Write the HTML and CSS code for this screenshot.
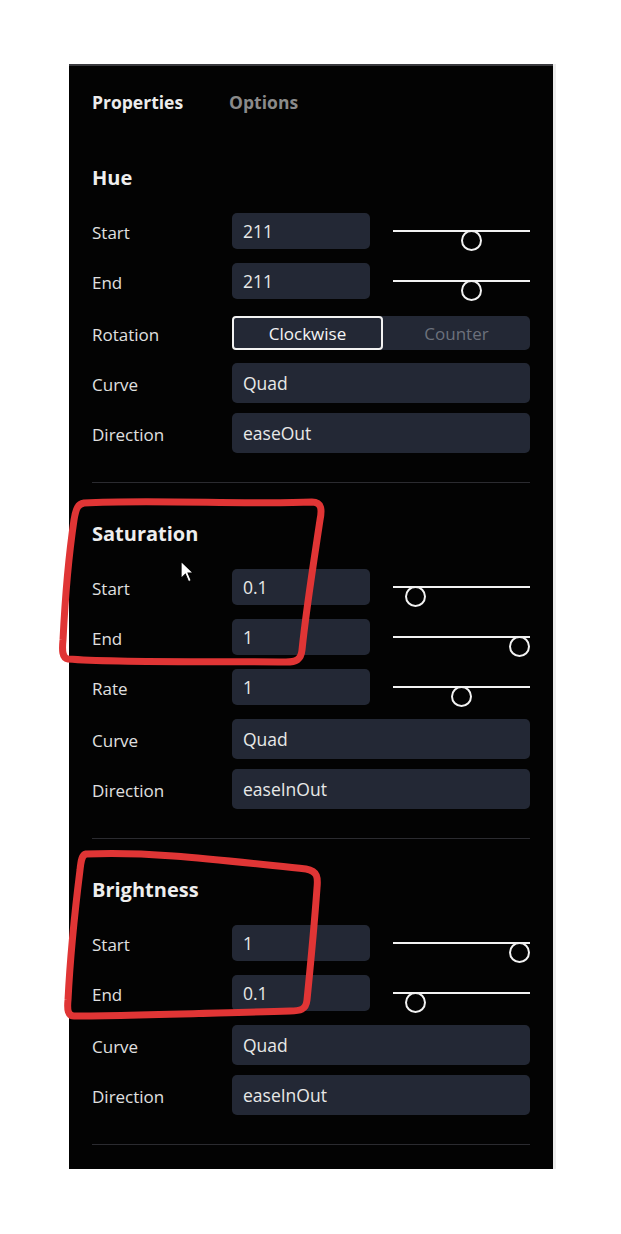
FILE: index.html
```html
<!DOCTYPE html>
<html>
<head>
	<meta charset="utf-8">
	<link rel="stylesheet" href="styles.css">
</head>
<body>
<div class="page">
	<div class="panel">
		<nav class="tabs">
			<span class="tab active">Properties</span>
			<span class="tab">Options</span>
		</nav>

		<section class="group first">
			<h2>Hue</h2>
			<div class="row">
				<span class="label">Start</span>
				<div class="field">211</div>
				<div class="slider"><span class="thumb" style="left: calc(0.586 * (100% - 21px))"></span></div>
			</div>
			<div class="row">
				<span class="label">End</span>
				<div class="field">211</div>
				<div class="slider"><span class="thumb" style="left: calc(0.586 * (100% - 21px))"></span></div>
			</div>
			<div class="row tall">
				<span class="label">Rotation</span>
				<div class="segment">
					<span class="opt on">Clockwise</span>
					<span class="opt">Counter</span>
				</div>
			</div>
			<div class="row tall">
				<span class="label">Curve</span>
				<div class="field wide">Quad</div>
			</div>
			<div class="row tall">
				<span class="label">Direction</span>
				<div class="field wide">easeOut</div>
			</div>
		</section>

		<section class="group">
			<h2>Saturation</h2>
			<div class="row">
				<span class="label">Start</span>
				<div class="field">0.1</div>
				<div class="slider"><span class="thumb" style="left: calc(0.1 * (100% - 21px))"></span></div>
			</div>
			<div class="row">
				<span class="label">End</span>
				<div class="field">1</div>
				<div class="slider"><span class="thumb" style="left: calc(1 * (100% - 21px))"></span></div>
			</div>
			<div class="row">
				<span class="label">Rate</span>
				<div class="field">1</div>
				<div class="slider"><span class="thumb" style="left: calc(0.5 * (100% - 21px))"></span></div>
			</div>
			<div class="row tall">
				<span class="label">Curve</span>
				<div class="field wide">Quad</div>
			</div>
			<div class="row tall">
				<span class="label">Direction</span>
				<div class="field wide">easeInOut</div>
			</div>
		</section>

		<section class="group">
			<h2>Brightness</h2>
			<div class="row">
				<span class="label">Start</span>
				<div class="field">1</div>
				<div class="slider"><span class="thumb" style="left: calc(1 * (100% - 21px))"></span></div>
			</div>
			<div class="row">
				<span class="label">End</span>
				<div class="field">0.1</div>
				<div class="slider"><span class="thumb" style="left: calc(0.1 * (100% - 21px))"></span></div>
			</div>
			<div class="row tall">
				<span class="label">Curve</span>
				<div class="field wide">Quad</div>
			</div>
			<div class="row tall">
				<span class="label">Direction</span>
				<div class="field wide">easeInOut</div>
			</div>
		</section>
	</div>
	<div class="scrollbar"></div>
</div>

<!-- hand drawn marks over the screenshot -->
<svg class="marks" width="621" height="1234" viewBox="0 0 621 1234">
	<path d="M84,503 C150,499 250,505 312,502 C322,502 322,510 320,520 C314,560 306,610 302,650 C301,660 296,662 286,662 C200,661 120,663 68,659 C62,658 62,650 63,640 C65,600 68,560 74,520 C76,508 78,504 84,503" />
	<path d="M86,854 C150,851 220,860 306,869 C318,871 318,878 317,888 C314,930 310,970 307,1000 C306,1010 300,1011 290,1011 C210,1013 130,1016 74,1016 C68,1016 67,1010 68,1000 C70,960 75,910 80,870 C81,860 82,855 86,854" />
</svg>
<svg class="cursor" width="15" height="24" viewBox="0 0 14 22">
	<path d="M1,1 L1,17 L5,13 L8,20 L10.5,19 L7.5,12 L12.5,12 Z" />
</svg>
</body>
</html>
```

FILE: styles.css
```css
body { margin: 0; background: #fff; font-family: "Open Sans", "Noto Sans", sans-serif; }
.page { display: flex; padding: 64px 0 0 69px; position: relative; }

.panel { width: 484px; height: 1105px; box-sizing: border-box; background: #030303; border-top: 2px solid #3a3a3e; padding: 24px 23px 0; color: #e2e2e2; }
.scrollbar { width: 3px; height: 1105px; background: #ececec; }

.tabs { display: flex; gap: 46px; }
.tab { font-size: 17.5px; font-weight: 700; line-height: 24px; color: #8a8a8a; }
.tab.active { color: #ececec; }

.group { padding: 38px 0 19px; border-bottom: 1px solid #2b2b30; }
.group.first { padding-top: 51px; }
.group h2 { margin: 0 0 22px; font-size: 20px; font-weight: 700; line-height: 26px; color: #eee; }

.row { display: flex; align-items: center; height: 36px; margin-bottom: 14px; }
.row.tall { height: 40px; margin-bottom: 10px; }
.label { width: 140px; flex: none; font-size: 17px; padding-top: 3px; color: #e0e0e0; }

.field { width: 138px; height: 36px; box-sizing: border-box; padding: 0 11px; display: flex; align-items: center; background: #232835; border-radius: 5px; font-size: 17.5px; color: #e8e8e8; }
.field.wide { flex: 1; height: 40px; }

.slider { flex: 1; align-self: stretch; margin-left: 23px; position: relative; }
.slider::before { content: ""; position: absolute; left: 0; right: 0; top: 17px; height: 2px; background: #f2f2f2; }
.thumb { position: absolute; top: 17px; width: 21px; height: 21px; box-sizing: border-box; border: 2px solid #f2f2f2; border-radius: 50%; background: #030303; }

.segment { flex: 1; height: 34px; display: flex; background: #232835; border-radius: 5px; }
.opt { flex: 1; display: flex; align-items: center; justify-content: center; font-size: 17px; color: #6c717c; }
.opt.on { border: 2px solid #f2f2f2; border-radius: 4px; color: #f4f4f4; }

.marks { position: absolute; left: 0; top: 0; pointer-events: none; }
.marks path { fill: none; stroke: #e03535; stroke-width: 7; stroke-linecap: round; stroke-linejoin: round; }
.cursor { position: absolute; left: 180px; top: 560px; pointer-events: none; }
.cursor path { fill: #fff; stroke: #000; stroke-width: 1; }
```
